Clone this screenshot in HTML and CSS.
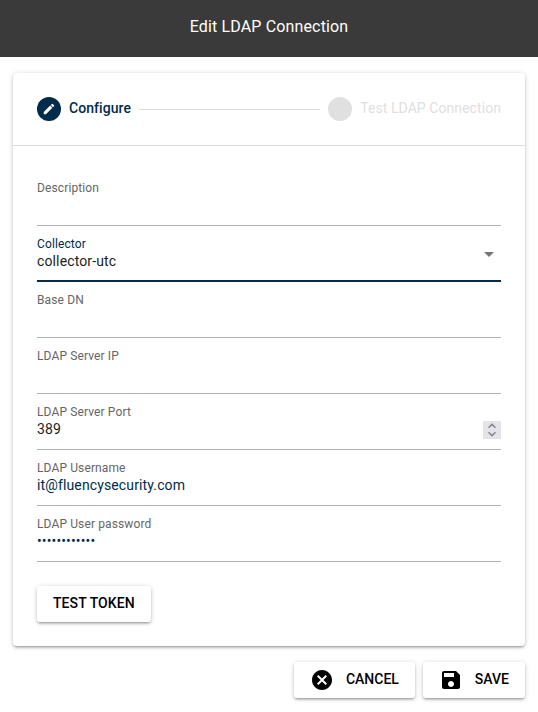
FILE: index.html
```html
<!DOCTYPE html>
<html lang="en">
<head>
    <meta charset="UTF-8">
    <meta name="viewport" content="width=device-width, initial-scale=1" />
    <title>Edit LDAP Connection</title>
    <link rel="stylesheet" href="styles.css">
</head>
<body>
    <header class="toolbar">
        <h1>Edit LDAP Connection</h1>
    </header>
    <main class="page">
        <section class="card">
            <div class="stepper">
                <div class="step active">
                    <span class="step-dot">
                        <svg width="14" height="14" viewBox="0 0 24 24"><path fill="currentColor" d="M3 17.25V21h3.75L17.81 9.94l-3.75-3.75L3 17.25zM20.71 7.04a1 1 0 0 0 0-1.41l-2.34-2.34a1 1 0 0 0-1.41 0l-1.83 1.83 3.75 3.75 1.83-1.83z"/></svg>
                    </span>
                    <span class="step-title">Configure</span>
                </div>
                <div class="step-line"></div>
                <div class="step disabled">
                    <span class="step-dot"></span>
                    <span class="step-title">Test LDAP Connection</span>
                </div>
            </div>
            <div class="form">
                <div class="field">
                    <span class="label">Description</span>
                </div>
                <div class="field focused">
                    <span class="label">Collector</span>
                    <span class="value">collector-utc</span>
                    <svg class="arrow" width="24" height="24" viewBox="0 0 24 24"><path fill="currentColor" d="M7 10l5 5 5-5z"/></svg>
                </div>
                <div class="field">
                    <span class="label">Base DN</span>
                </div>
                <div class="field">
                    <span class="label">LDAP Server IP</span>
                </div>
                <div class="field">
                    <span class="label">LDAP Server Port</span>
                    <span class="value">389</span>
                    <span class="spinner">
                        <svg width="18" height="18" viewBox="0 0 18 18"><path fill="none" stroke="currentColor" stroke-width="1.5" d="M5.5 6.7L9 3.4l3.5 3.3M5.5 11.3L9 14.6l3.5-3.3"/></svg>
                    </span>
                </div>
                <div class="field">
                    <span class="label">LDAP Username</span>
                    <span class="value filled">it@fluencysecurity.com</span>
                </div>
                <div class="field">
                    <span class="label">LDAP User password</span>
                    <span class="value filled">••••••••••••</span>
                </div>
                <button class="btn test"><span>TEST TOKEN</span></button>
            </div>
        </section>
        <div class="actions">
            <button class="btn">
                <svg width="24" height="24" viewBox="0 0 24 24"><path fill="currentColor" d="M12 2C6.47 2 2 6.47 2 12s4.47 10 10 10 10-4.47 10-10S17.53 2 12 2zm5 13.59L15.59 17 12 13.41 8.41 17 7 15.59 10.59 12 7 8.41 8.41 7 12 10.59 15.59 7 17 8.41 13.41 12 17 15.59z"/></svg>
                <span>CANCEL</span>
            </button>
            <button class="btn">
                <svg width="24" height="24" viewBox="0 0 24 24"><path fill="currentColor" d="M17 3H5a2 2 0 0 0-2 2v14a2 2 0 0 0 2 2h14c1.1 0 2-.9 2-2V7l-4-4zm-5 16c-1.66 0-3-1.34-3-3s1.34-3 3-3 3 1.34 3 3-1.34 3-3 3zm3-10H5V5h10v4z"/></svg>
                <span>SAVE</span>
            </button>
        </div>
    </main>
</body>
</html>
```
FILE: styles.css
```css
* {
    margin: 0;
    padding: 0;
    box-sizing: border-box;
}
body {
    font-family: Roboto, sans-serif;
    font-size: 14px;
    background: #fff;
    color: #1d1d1d;
}
svg {
    display: block;
}
.toolbar {
    display: flex;
    align-items: center;
    justify-content: center;
    height: 57px;
    padding-bottom: 5px;
    background-color: #3a3a3a;
    color: #fff;
}
.toolbar h1 {
    font-size: 16px;
    font-weight: 400;
    letter-spacing: 0.15px;
}
.page {
    padding: 16px 13px 14px;
}
.card {
    border-radius: 4px;
    background: #fff;
    box-shadow: 0 1px 5px rgba(0, 0, 0, 0.2), 0 2px 2px rgba(0, 0, 0, 0.14), 0 3px 1px -2px rgba(0, 0, 0, 0.12);
}
.stepper {
    display: flex;
    align-items: center;
    gap: 8px;
    height: 73px;
    padding: 0 24px;
    border-bottom: 1px solid #dcdcdc;
}
.step {
    display: flex;
    align-items: center;
    gap: 8px;
}
.step-dot {
    display: flex;
    align-items: center;
    justify-content: center;
    width: 24px;
    height: 24px;
    border-radius: 50%;
    background: #e0e0e0;
    color: #fff;
}
.step-title {
    letter-spacing: 0.07px;
    line-height: 18px;
    padding-bottom: 2px;
}
.step.active {
    color: #002b4c;
}
.step.active .step-dot {
    background: #002b4c;
}
.step.active .step-title {
    font-weight: 500;
}
.step.disabled {
    color: #e0e0e0;
}
.step-line {
    flex: 1;
    height: 1px;
    background: #dcdcdc;
}
.form {
    padding: 24px;
}
.field {
    position: relative;
    display: flex;
    flex-direction: column;
    height: 56px;
    padding-top: 10px;
    border-bottom: 1px solid #b4b4b4;
}
.field.focused {
    border-bottom: 2px solid #002b4c;
}
.label {
    font-size: 12px;
    line-height: 16px;
    letter-spacing: 0.12px;
    color: #666;
}
.focused .label {
    color: #002b4c;
}
.value {
    line-height: 18px;
    letter-spacing: 0.13px;
}
.value.filled {
    color: #002b4c;
}
.arrow {
    position: absolute;
    right: 0;
    top: 16px;
    color: #757575;
}
.spinner {
    position: absolute;
    right: 0;
    top: 27px;
    background: #e4e4e8;
    color: #85858d;
}
.btn {
    display: flex;
    align-items: center;
    height: 36px;
    padding: 0 16px;
    border: none;
    border-radius: 3px;
    background: #fff;
    color: #000;
    font-family: inherit;
    font-size: 14px;
    font-weight: 500;
    cursor: pointer;
    box-shadow: 0 1px 5px rgba(0, 0, 0, 0.2), 0 2px 2px rgba(0, 0, 0, 0.14), 0 3px 1px -2px rgba(0, 0, 0, 0.12);
}
.btn svg {
    margin-right: 12px;
}
.btn span {
    line-height: 16px;
    padding-bottom: 2px;
}
.test {
    margin-top: 24px;
    letter-spacing: 0.07px;
}
.actions {
    display: flex;
    justify-content: flex-end;
    gap: 8px;
    margin-top: 16px;
}
```
